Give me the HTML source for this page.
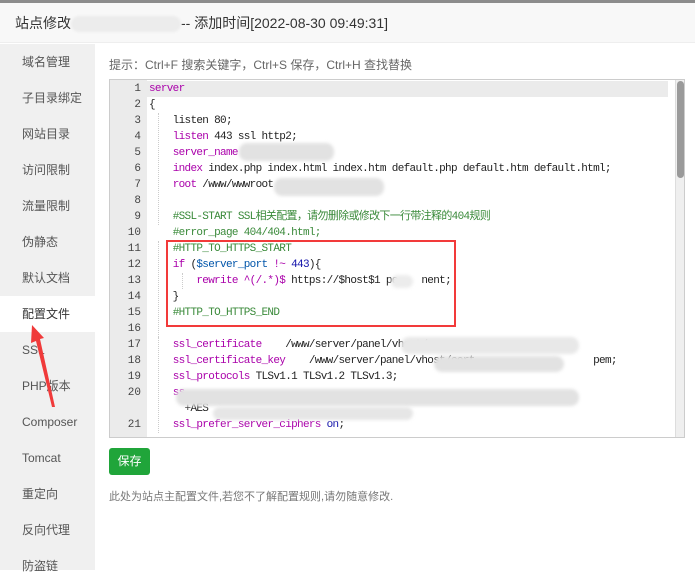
<!DOCTYPE html>
<html><head><meta charset="utf-8"><style>
*{margin:0;padding:0;box-sizing:border-box}
body{width:695px;height:570px;overflow:hidden;background:#fff;font-family:"Liberation Sans","Noto Sans CJK SC",sans-serif;position:relative}
.top{position:absolute;left:0;top:0;width:695px;height:3px;background:#8c8c8c}
.hdr{position:absolute;left:0;top:3px;width:695px;height:40px;background:#f8f8f8;border-bottom:1px solid #eee;font-size:14px;color:#333;line-height:40px;padding-left:15px}
.side{position:absolute;left:0;top:44px;width:95px;height:526px;background:#f0f0f0}
.side div{height:36px;line-height:36px;padding-left:22px;font-size:12px;color:#555}
.side div.on{background:#fff;color:#333}
.tip{position:absolute;left:109px;top:56px;font-size:12px;color:#666}
.ed{position:absolute;left:109px;top:79px;width:576px;height:359px;border:1px solid #ccc;overflow:hidden;background:#fff}
.gut{position:absolute;left:0;top:0;width:37px;height:100%;background:#ebebeb}
.act{position:absolute;left:0;top:1px;width:558px;height:16px;background:#ebebeb}
.code{position:absolute;left:0;top:1px;font-family:"Liberation Mono",monospace;font-size:11px;letter-spacing:-0.68px;line-height:16px;color:#222;white-space:pre}
.ln{display:inline-block;width:31px;text-align:right;color:#444;margin-right:8px;letter-spacing:0}
.k{color:#a0a}.c{color:#3a8a3a}.n{color:#11a}.v{color:#05a}
.sb{position:absolute;right:0;top:0;width:9px;height:100%;background:#efefef;border-left:1px solid #ddd}
.th{position:absolute;left:1px;top:1px;width:7px;height:97px;background:#9a9a9a;border-radius:4px}
.blur{position:absolute;background:#e2e2e2;border-radius:8px;filter:blur(1.5px)}
.red{position:absolute;left:166px;top:240px;width:290px;height:87px;border:2px solid #f23a3a}
.btn{position:absolute;left:109px;top:448px;width:41px;height:27px;background:#20a53a;border-radius:3px;color:#fff;font-size:12px;line-height:27px;text-align:center}
.note{position:absolute;left:109px;top:488px;font-size:11px;color:#777}
.guide{position:absolute;width:0;border-left:1px dotted #ccc}
</style></head><body>
<div class="top"></div>
<div class="hdr">站点修改<span style="display:inline-block;width:110px;height:16px;background:#ececec;border-radius:8px;vertical-align:middle;filter:blur(1px)"></span>-- 添加时间[2022-08-30 09:49:31]</div>
<div class="side">
<div>域名管理</div><div>子目录绑定</div><div>网站目录</div><div>访问限制</div><div>流量限制</div><div>伪静态</div><div>默认文档</div><div class="on">配置文件</div><div>SSL</div><div>PHP版本</div><div>Composer</div><div>Tomcat</div><div>重定向</div><div>反向代理</div><div>防盗链</div>
</div>
<div class="tip">提示：Ctrl+F 搜索关键字，Ctrl+S 保存，Ctrl+H 查找替换</div>
<div class="ed">
<div class="gut"></div><div class="act"></div>
<div class="guide" style="left:48px;top:33px;height:112px"></div>
<div class="guide" style="left:48px;top:161px;height:96px"></div>
<div class="guide" style="left:48px;top:257px;height:96px"></div>
<div class="guide" style="left:72px;top:193px;height:16px"></div>
<div class="code"><span class="ln">1</span><span class="k">server</span>
<span class="ln">2</span>{
<span class="ln">3</span>    listen 80;
<span class="ln">4</span>    <span class="k">listen</span> 443 ssl http2;
<span class="ln">5</span>    <span class="k">server_name</span>
<span class="ln">6</span>    <span class="k">index</span> index.php index.html index.htm default.php default.htm default.html;
<span class="ln">7</span>    <span class="k">root</span> /www/wwwroot
<span class="ln">8</span>
<span class="ln">9</span>    <span class="c">#SSL-START SSL相关配置，请勿删除或修改下一行带注释的404规则</span>
<span class="ln">10</span>    <span class="c">#error_page 404/404.html;</span>
<span class="ln">11</span>    <span class="c">#HTTP_TO_HTTPS_START</span>
<span class="ln">12</span>    <span class="k">if</span> (<span class="v">$server_port</span> <span class="k">!~</span> <span class="n">443</span>){
<span class="ln">13</span>        <span class="k">rewrite</span> <span class="k">^(/.*)$</span> https://$host$1 pe    nent;
<span class="ln">14</span>    }
<span class="ln">15</span>    <span class="c">#HTTP_TO_HTTPS_END</span>
<span class="ln">16</span>
<span class="ln">17</span>    <span class="k">ssl_certificate</span>    /www/server/panel/vhost/c
<span class="ln">18</span>    <span class="k">ssl_certificate_key</span>    /www/server/panel/vhost/cert                    pem;
<span class="ln">19</span>    <span class="k">ssl_protocols</span> TLSv1.1 TLSv1.2 TLSv1.3;
<span class="ln">20</span>    <span class="k">ss</span>
<span class="ln"></span>      +AES
<span class="ln">21</span>    <span class="k">ssl_prefer_server_ciphers</span> <span class="n">on</span>;</div>
<div class="blur" style="left:129px;top:63px;width:95px;height:18px"></div>
<div class="blur" style="left:164px;top:98px;width:110px;height:18px"></div>
<div class="blur" style="left:281px;top:195px;width:22px;height:13px;background:#ececec"></div>
<div class="blur" style="left:291px;top:257px;width:178px;height:17px;background:#e8e8e8"></div>
<div class="blur" style="left:324px;top:276px;width:130px;height:16px"></div>
<div class="blur" style="left:66px;top:309px;width:403px;height:17px"></div>
<div class="blur" style="left:103px;top:327px;width:200px;height:13px;background:#e6e6e6"></div>
<div class="sb"><div class="th"></div></div>
</div>
<div class="red"></div>
<div class="btn">保存</div>
<div class="note">此处为站点主配置文件,若您不了解配置规则,请勿随意修改.</div>
<svg style="position:absolute;left:0;top:0" width="100" height="420"><polygon points="32,325 44,338 40,339 55,407 52,407 36,341 31,343" fill="#f03a3a"/></svg>
</body></html>
